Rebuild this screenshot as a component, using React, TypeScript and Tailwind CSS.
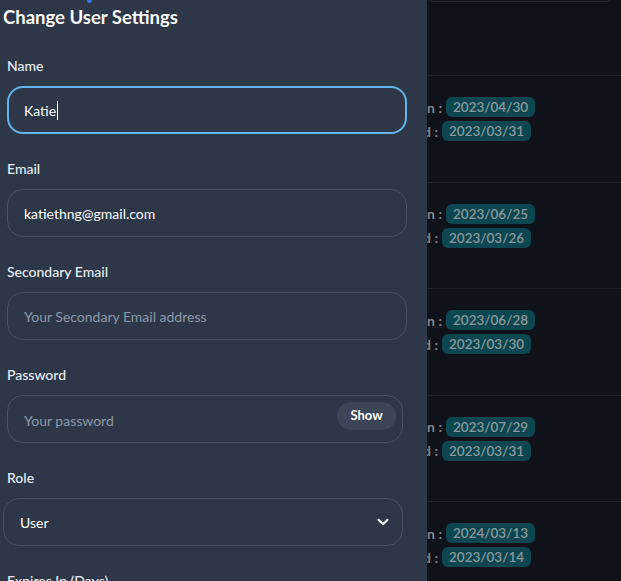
import { ChevronDown } from "lucide-react";

const rows = [
  { expires: "2023/04/30", created: "2023/03/31" },
  { expires: "2023/06/25", created: "2023/03/26" },
  { expires: "2023/06/28", created: "2023/03/30" },
  { expires: "2023/07/29", created: "2023/03/31" },
  { expires: "2024/03/13", created: "2023/03/14" },
];

function Badge({ children }: { children: string }) {
  return (
    <span className="rounded-md bg-[#0c4650] px-[7px] h-[20px] leading-[20px] text-[13.5px] font-semibold text-[#8a989c]">
      {children}
    </span>
  );
}

function Field({ label, children }: { label: string; children: React.ReactNode }) {
  return (
    <div className="flex flex-col">
      <label className="pl-[7px] h-[20px] leading-[20px] text-[14px] font-medium text-[#e8ecf2]">{label}</label>
      <div className="mt-[10px]">{children}</div>
    </div>
  );
}

export default function App() {
  return (
    <div className="relative h-[581px] w-[621px] overflow-hidden bg-[#0f1218] font-['Lato','Open_Sans',sans-serif]">
      {/* page behind the overlay */}
      <div className="flex flex-col pl-[427px]">
        <div className="-mt-[40px] mr-[9px] h-[42px] rounded-md border border-[#262a32]"></div>
        <div className="h-[73px]"></div>
        {rows.map((r) => (
          <div key={r.expires} className="h-[106.5px] border-t border-[#1d2129] -ml-[160px]">
            <div className="mt-[21px] flex flex-col gap-[4px] text-[14px] font-bold text-[#7f838b]">
              <div className="flex h-[20px] items-center gap-[4px]">
                <span className="w-[175px] text-right">Logged In :</span>
                <Badge>{r.expires}</Badge>
              </div>
              <div className="flex h-[20px] items-center gap-[4px]">
                <span className="w-[171px] text-right">Created :</span>
                <Badge>{r.created}</Badge>
              </div>
            </div>
          </div>
        ))}
      </div>

      {/* drawer */}
      <div className="absolute inset-y-0 left-0 w-[427px] bg-[#2d3748] overflow-hidden">
        <div className="absolute left-[87px] -top-[2px] h-[5px] w-[5px] rounded-full bg-[#3b6fe8]"></div>
        <h2 className="pl-[3px] pt-[5px] h-[25px] leading-[25px] text-[18.5px] font-bold text-white">
          Change User Settings
        </h2>
        <div className="mt-[31px] flex flex-col gap-[25px]">
          <Field label="Name">
            <div className="ml-[7px] w-[400px] h-[48px] rounded-2xl border-2 border-[#63b3ed] flex items-center pl-[15px] text-[14px] text-white">
              Katie<span className="ml-[1px] inline-block h-[19px] w-px bg-white"></span>
            </div>
          </Field>
          <Field label="Email">
            <div className="ml-[7px] w-[400px] h-[48px] rounded-2xl border border-[#4a5366] flex items-center pl-[16px] text-[14px] text-white">
              katiethng@gmail.com
            </div>
          </Field>
          <Field label="Secondary Email">
            <div className="ml-[7px] w-[400px] h-[48px] rounded-2xl border border-[#4a5366] flex items-center pl-[16px] text-[14px] text-[#8f99a9]">
              Your Secondary Email address
            </div>
          </Field>
          <Field label="Password">
            <div className="ml-[7px] w-[396px] h-[48px] rounded-2xl border border-[#4a5366] flex items-center justify-between pl-[16px] pr-[6px] text-[14px] text-[#8f99a9]">
              <span className="mt-[3px]">Your password</span>
              <span className="mb-[6px] h-[28px] w-[59px] rounded-full bg-[#3d4657] flex items-center justify-center text-[13px] font-bold text-white">
                Show
              </span>
            </div>
          </Field>
          <Field label="Role">
            <div className="ml-[3px] w-[400px] h-[48px] rounded-2xl border border-[#4a5366] flex items-center justify-between pl-[16px] pr-[10px] text-[14px] text-white">
              <span>User</span>
              <ChevronDown size={18} strokeWidth={2.8} className="text-white" />
            </div>
          </Field>
          <Field label="Expires In (Days)">
            <div className="ml-[7px] w-[400px] h-[48px] rounded-2xl border border-[#4a5366]"></div>
          </Field>
        </div>
      </div>
    </div>
  );
}
